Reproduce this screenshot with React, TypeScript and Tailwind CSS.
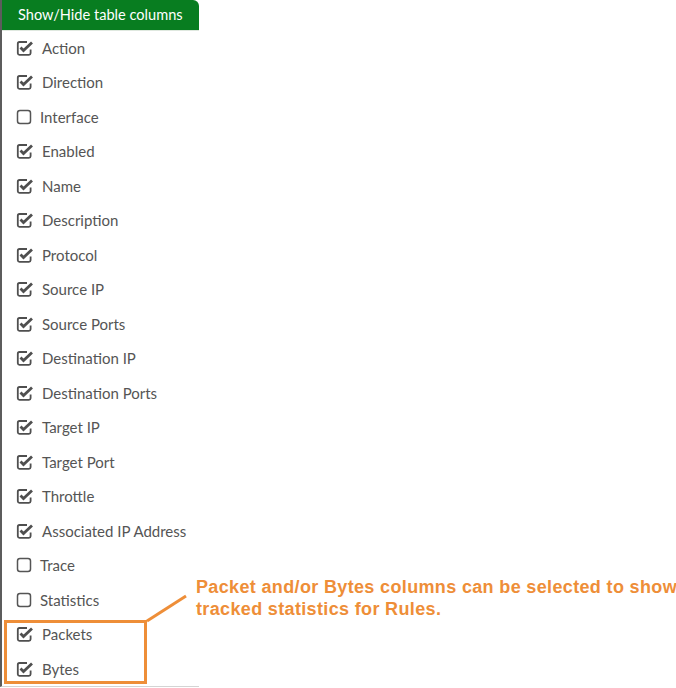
import React from 'react';

const columns: { label: string; checked: boolean }[] = [
  { label: 'Action', checked: true },
  { label: 'Direction', checked: true },
  { label: 'Interface', checked: false },
  { label: 'Enabled', checked: true },
  { label: 'Name', checked: true },
  { label: 'Description', checked: true },
  { label: 'Protocol', checked: true },
  { label: 'Source IP', checked: true },
  { label: 'Source Ports', checked: true },
  { label: 'Destination IP', checked: true },
  { label: 'Destination Ports', checked: true },
  { label: 'Target IP', checked: true },
  { label: 'Target Port', checked: true },
  { label: 'Throttle', checked: true },
  { label: 'Associated IP Address', checked: true },
  { label: 'Trace', checked: false },
  { label: 'Statistics', checked: false },
  { label: 'Packets', checked: true },
  { label: 'Bytes', checked: true },
];

const CheckIcon = ({ checked }: { checked: boolean }) =>
  checked ? (
    <svg width="18" height="16" viewBox="0 0 18 16" className="shrink-0">
      <path
        d="M11 2H3.5A1.8 1.8 0 0 0 1.8 3.8v9.4a1.8 1.8 0 0 0 1.7 1.7h9.4a1.8 1.8 0 0 0 1.7-1.7V9.5"
        fill="none"
        stroke="#4f4f4f"
        strokeWidth="1.8"
      />
      <path d="M4.5 7.5l3 3L16 2.5" fill="none" stroke="#4f4f4f" strokeWidth="2.8" strokeLinejoin="miter" />
    </svg>
  ) : (
    <svg width="16" height="16" viewBox="0 0 16 16" className="shrink-0">
      <rect x="1.5" y="1.5" width="13" height="13" rx="2.5" fill="none" stroke="#555" strokeWidth="1.5" />
    </svg>
  );

export default function App() {
  return (
    <div className="relative w-[676px] h-[688px] bg-white overflow-hidden font-['Lato',sans-serif]">
      <div className="w-[199px] h-[687px] border-l-2 border-[#5c5c5c] border-b border-b-[#d4d4d4] flex flex-col">
        <div className="h-[32px] bg-[#087d20] rounded-tr-[6px] flex items-center pl-[16px] text-white text-[14.6px] border-b border-[#dfe8df]">
          Show/Hide table columns
        </div>
        <div className="flex flex-col">
          {columns.map((c) => (
            <div key={c.label} className="h-[34.5px] flex items-center pl-[14px] text-[15px] text-[#555]">
              <CheckIcon checked={c.checked} />
              <span className="ml-[8px]">{c.label}</span>
            </div>
          ))}
        </div>
      </div>

      {/* callout */}
      <div className="absolute left-[4px] top-[620px] w-[143px] h-[64px] border-[3px] border-[#ee8e38]" />
      <svg className="absolute left-0 top-0" width="676" height="688">
        <line x1="147" y1="621" x2="186" y2="596" stroke="#ee8e38" strokeWidth="3" />
      </svg>
      <div className="absolute left-[196px] top-[576px] text-[#ee8e38] font-bold text-[18px] tracking-[0.35px] leading-[22px] whitespace-nowrap font-['Liberation_Sans',Arial,sans-serif]">
        <div>Packet and/or Bytes columns can be selected to show</div>
        <div>tracked statistics for Rules.</div>
      </div>
    </div>
  );
}
